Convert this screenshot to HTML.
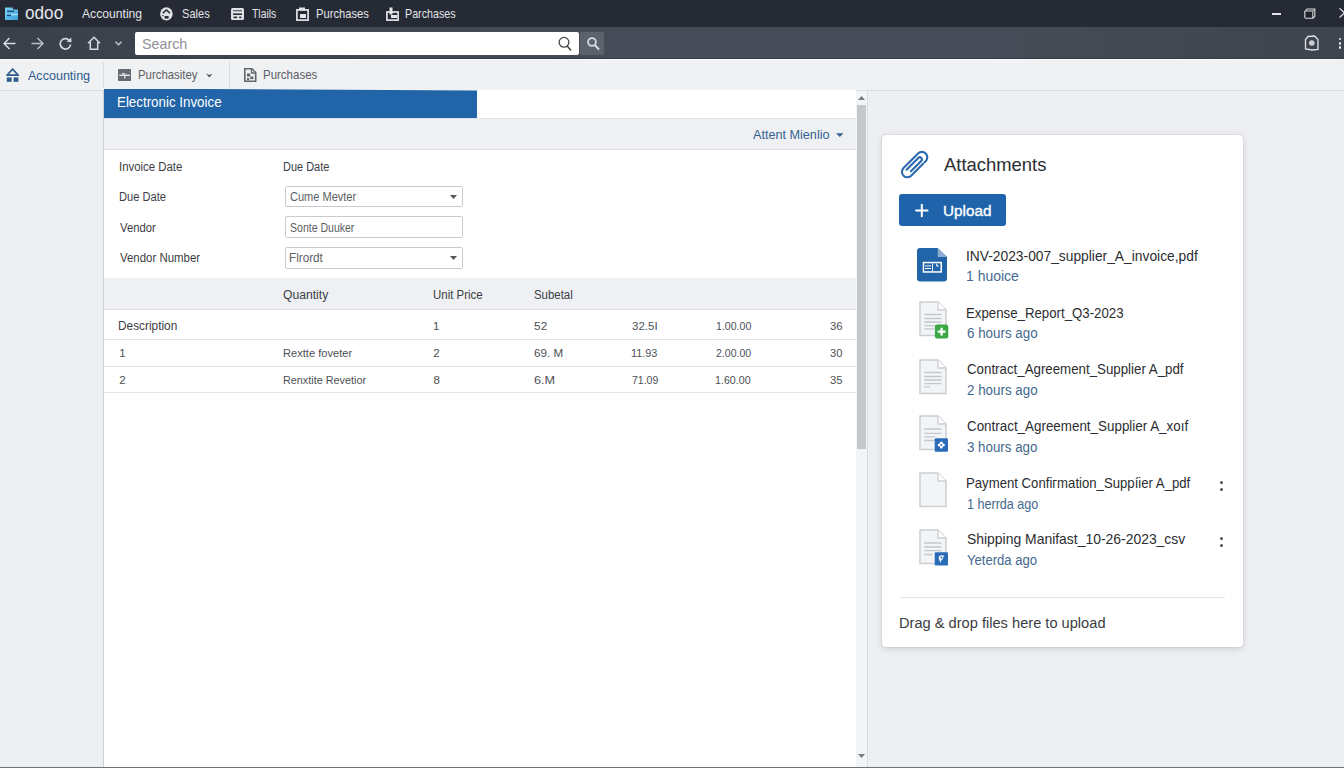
<!DOCTYPE html>
<html><head><meta charset="utf-8">
<style>
*{box-sizing:border-box;margin:0;padding:0}
html,body{width:1344px;height:768px;overflow:hidden}
body{font-family:"Liberation Sans",sans-serif;background:#edeff2;position:relative;color:#333}
.a{position:absolute}
.t{position:absolute;white-space:nowrap;line-height:1;top:0}
.wt{color:#e2e4e8;font-size:13px}
.bc{color:#5b5f66;font-size:13px}
.lbl{font-size:12.5px;color:#3b3e44}
.itx{font-size:12px;color:#5b5e63}
.num{font-size:11.5px;color:#4d5055}
.fname{font-size:15px;color:#2b2d31}
.fsub{font-size:14px;color:#45698e}
</style></head><body>
<!-- title bar -->
<div class="a" style="left:0;top:0;width:1344px;height:27px;background:#252a34"></div>
<svg class="a" style="left:4px;top:6px" width="15" height="15" viewBox="0 0 15 15"><defs><linearGradient id="lg" x1="0" y1="0" x2="1" y2="1"><stop offset="0" stop-color="#7fd4f6"></stop><stop offset="1" stop-color="#3a9fdc"></stop></linearGradient></defs><path d="M1 1.5 H8.5 L9.5 3.5 H14 V14 H1 Z" fill="url(#lg)"></path><rect x="3" y="4.6" width="7" height="1.4" fill="#1b4a70"></rect><rect x="3" y="8.8" width="4" height="1.3" fill="#1b4a70"></rect><rect x="7" y="8.2" width="7" height="1" fill="#bfeaff"></rect></svg>
<div class="t" style="left: 25.46px; color: rgb(230, 232, 236); font-size: 18px; top: 4px; transform: scaleX(0.9548); transform-origin: 0px 0px;">odoo</div>
<div class="t wt" style="left: 81.8px; top: 7.4px; transform: scaleX(0.9341); transform-origin: 0px 0px;">Accounting</div>
<svg class="a" style="left:159.5px;top:7.2px" width="13" height="14" viewBox="0 0 13 14"><ellipse cx="6.4" cy="6.8" rx="6.3" ry="6.6" fill="#dfe1e5"></ellipse><path d="M2.8 6.2 L6.4 3 L10 6.2" fill="none" stroke="#2a2f39" stroke-width="1.6"></path><rect x="4.6" y="9" width="4" height="2.6" fill="#2a2f39"></rect><rect x="2.3" y="8" width="1.2" height="1.2" fill="#2a2f39"></rect></svg>
<div class="t wt" style="left: 181.65px; top: 7.4px; transform: scaleX(0.8516); transform-origin: 0px 0px;">Sales</div>
<svg class="a" style="left:231px;top:8px" width="13" height="12" viewBox="0 0 13 12"><rect x="0" y="0" width="13" height="12" rx="1.5" fill="#dfe1e5"></rect><rect x="2" y="2.3" width="9" height="0.9" fill="#2a2f39"></rect><rect x="2" y="5.4" width="9" height="1.6" fill="#2a2f39"></rect><rect x="2.5" y="8.6" width="3.8" height="1.7" rx="0.8" fill="#2a2f39"></rect><rect x="8" y="8.6" width="2.5" height="1.7" rx="0.8" fill="#2a2f39"></rect></svg>
<div class="t wt" style="left: 251.84px; top: 7.4px; transform: scaleX(0.7973); transform-origin: 0px 0px;">Tlails</div>
<svg class="a" style="left:296px;top:7px" width="13" height="14" viewBox="0 0 13 14"><rect x="0.9" y="2.9" width="11.2" height="10.2" fill="none" stroke="#e2e4e8" stroke-width="1.7"></rect><rect x="3" y="0.5" width="6" height="3" fill="#e2e4e8"></rect><rect x="4" y="7" width="6" height="4" fill="#e2e4e8"></rect></svg>
<div class="t wt" style="left: 315.53px; top: 7.4px; transform: scaleX(0.86); transform-origin: 0px 0px;">Purchases</div>
<svg class="a" style="left:386px;top:7px" width="13" height="14" viewBox="0 0 13 14"><rect x="0.9" y="5" width="11.2" height="8.1" fill="none" stroke="#e2e4e8" stroke-width="1.7"></rect><rect x="3.5" y="0.5" width="3" height="7" fill="#e2e4e8"></rect><rect x="5" y="8" width="6" height="3" fill="#e2e4e8"></rect></svg>
<div class="t wt" style="left: 404.96px; top: 7.4px; transform: scaleX(0.8234); transform-origin: 0px 0px;">Parchases</div>
<div class="a" style="left:1272px;top:13px;width:9px;height:1.5px;background:#e2e4e8"></div>
<svg class="a" style="left:1304px;top:7.6px" width="12" height="11" viewBox="0 0 12 11"><path d="M1.2 3 L3 1 H10.8 V8.2 L9 10.2 H1.8 A1 1 0 0 1 0.8 9.2 V3.5 Z" fill="#1e222a" stroke="#dcdee2" stroke-width="1.1"></path><path d="M1.2 3 H8.8 V10 M8.8 3 L10.8 1" fill="none" stroke="#dcdee2" stroke-width="1"></path></svg>
<svg class="a" style="left:1338.5px;top:8px" width="6" height="10" viewBox="0 0 6 10"><path d="M0.5 0.3 L6.5 5.8 M0.5 9.5 L6.5 4" stroke="#dcdee2" stroke-width="1.2"></path></svg>

<!-- toolbar -->
<div class="a" style="left:0;top:27px;width:1344px;height:32px;background:linear-gradient(90deg,#3a404a 0%,#434954 30%,#474d58 50%,#464c57 75%,#3e444e 100%);border-bottom:1px solid #353a42"></div>
<svg class="a" style="left:3px;top:37px" width="13" height="13" viewBox="0 0 13 13"><path d="M12.5 6.5 H1.5 M6.5 1 L1 6.5 L6.5 12" fill="none" stroke="#d6d9dd" stroke-width="1.5"></path></svg>
<svg class="a" style="left:31px;top:37px" width="13" height="13" viewBox="0 0 13 13"><path d="M0.5 6.5 H11.5 M6.5 1 L12 6.5 L6.5 12" fill="none" stroke="#b9bdc3" stroke-width="1.5"></path></svg>
<svg class="a" style="left:59px;top:37px" width="13" height="13" viewBox="0 0 13 13"><path d="M11 4.3 A5.2 5.2 0 1 0 11.6 7.5" fill="none" stroke="#d6d9dd" stroke-width="1.7"></path><path d="M7.5 4.8 L12.5 5.2 L12.3 0.5 Z" fill="#d6d9dd"></path></svg>
<svg class="a" style="left:87px;top:36px" width="14" height="14" viewBox="0 0 14 14"><path d="M1 7.2 L7 1.2 L13 7.2 M3.3 6 V13.2 H10.7 V6" fill="none" stroke="#d6d9dd" stroke-width="1.5"></path></svg>
<svg class="a" style="left:115px;top:41px" width="7" height="5" viewBox="0 0 7 5"><path d="M0.5 0.7 L3.5 3.8 L6.5 0.7" fill="none" stroke="#c4c8cd" stroke-width="1.4"></path></svg>
<div class="a" style="left:135px;top:32.4px;width:443.5px;height:22.2px;background:#fff;border-radius:2px"></div>
<div class="t" style="left: 141.75px; color: rgb(142, 144, 148); font-size: 15px; top: 35.8px; transform: scaleX(0.9521); transform-origin: 0px 0px;">Search</div>
<svg class="a" style="left:557px;top:35px" width="16" height="17" viewBox="0 0 16 17"><circle cx="7" cy="7.3" r="4.9" fill="none" stroke="#454545" stroke-width="1.3"></circle><path d="M10.2 11 L14 15.5" stroke="#454545" stroke-width="1.5"></path></svg>
<div class="a" style="left:579.6px;top:32px;width:24.5px;height:22.6px;background:#5b626c;border-radius:2px"></div>
<svg class="a" style="left:586px;top:36px" width="15" height="15" viewBox="0 0 15 15"><circle cx="6" cy="6" r="3.9" fill="none" stroke="#d8dbdf" stroke-width="1.8"></circle><path d="M8.8 9 L13 13.5" stroke="#d8dbdf" stroke-width="2"></path></svg>
<svg class="a" style="left:1304px;top:35px" width="15" height="16" viewBox="0 0 15 16"><path d="M4 1.5 L10.5 1 L14 4.5 V14.5 L8 15 L1.5 14 V4.5 Z" fill="none" stroke="#e0e2e6" stroke-width="1.3"></path><circle cx="7.8" cy="8" r="2.8" fill="#c9ccd1"></circle></svg>
<div class="a" style="left:1338.5px;top:37.6px;width:2.8px;height:2.8px;background:#e2e4e8;border-radius:50%"></div>
<div class="a" style="left:1338.5px;top:42px;width:2.8px;height:2.8px;background:#e2e4e8;border-radius:50%"></div>
<div class="a" style="left:1338.5px;top:46.3px;width:2.8px;height:2.8px;background:#e2e4e8;border-radius:50%"></div>

<!-- breadcrumb -->
<div class="a" style="left:0;top:59px;width:1344px;height:32px;background:#f0f1f3;border-top:1px solid #fafbfc;border-bottom:1.5px solid #d9dbde"></div>
<svg class="a" style="left:6px;top:67.5px" width="14" height="14" viewBox="0 0 14 14"><path d="M1.6 6.5 L6.6 1.2 L11.6 6.5" fill="none" stroke="#2f5c8e" stroke-width="1.8"></path><rect x="0.3" y="6.2" width="12.7" height="1.8" fill="#2f5c8e"></rect><rect x="0.8" y="9.4" width="4.8" height="4.4" fill="#2f5c8e"></rect><rect x="7.6" y="9.4" width="4.8" height="4.4" fill="#2f5c8e"></rect></svg>
<div class="t" style="left: 28.3px; color: rgb(45, 91, 140); font-size: 13px; top: 68.6px; transform: scaleX(0.9655); transform-origin: 0px 0px;">Accounting</div>
<div class="a" style="left:103px;top:62px;width:1px;height:26px;background:#d9dce0"></div>
<svg class="a" style="left:117.7px;top:69px" width="13.2" height="12" viewBox="0 0 13.2 12"><rect x="0" y="0" width="13.2" height="12" rx="1" fill="#676b71"></rect><rect x="1.2" y="5.6" width="10.8" height="1.3" fill="#eef0f2"></rect><path d="M3.5 4.2 Q5 3.4 7 4.6 L8.5 5.6 L5 5.6Z" fill="#eef0f2"></path><rect x="6.2" y="6.5" width="1.2" height="3" fill="#eef0f2"></rect></svg>
<div class="t bc" style="left: 137.81px; top: 68.1px; transform: scaleX(0.8759); transform-origin: 0px 0px;">Purchasitey</div>
<svg class="a" style="left:205.6px;top:73px" width="6.5" height="5" viewBox="0 0 6.5 5"><path d="M0 0.6 L3.25 2 L6.5 0.6 L3.25 4.6Z" fill="#4a4e55"></path></svg>
<div class="a" style="left:229px;top:62px;width:1px;height:26px;background:#d9dce0"></div>
<svg class="a" style="left:244px;top:67.5px" width="12.5" height="14" viewBox="0 0 12.5 14"><path d="M0.8 0.8 H8 L11.7 4.5 V13.2 H0.8 Z" fill="none" stroke="#62666c" stroke-width="1.6"></path><path d="M7.5 0.8 V5 H11.7" fill="none" stroke="#62666c" stroke-width="1.3"></path><rect x="3" y="5.5" width="3.2" height="3" fill="#62666c"></rect><rect x="6.2" y="8.5" width="3.2" height="2.6" fill="#62666c"></rect><rect x="3" y="10" width="2.2" height="2.2" fill="#62666c"></rect></svg>
<div class="t bc" style="left: 263.1px; top: 68.3px; transform: scaleX(0.8834); transform-origin: 0px 0px;">Purchases</div>

<!-- form panel -->
<div class="a" style="left:103px;top:90px;width:753px;height:677px;background:#fff;border-left:1px solid #cdd1d6"></div>
<div class="a" style="left:104px;top:88.6px;width:373px;height:29.6px;background:#2164a7;clip-path:polygon(0 0,100% 1.8px,100% 100%,0 100%)"></div>
<div class="t" style="left: 117.46px; color: rgb(255, 255, 255); font-size: 14px; top: 95px; transform: scaleX(0.9532); transform-origin: 0px 0px;">Electronic Invoice</div>
<div class="a" style="left:104px;top:118px;width:752px;height:32px;background:#eef0f3;border-top:1px solid #e1e4e8;border-bottom:1px solid #dde0e4"></div>
<div class="t" style="left: 753.4px; color: rgb(53, 99, 143); font-size: 12.5px; top: 128.75px; transform: scaleX(1.0103); transform-origin: 0px 0px;">Attent Mienlio</div>
<svg class="a" style="left:836px;top:132.8px" width="8" height="5" viewBox="0 0 8 5"><path d="M0 0.3 H7.5 L3.75 4Z" fill="#35638f"></path></svg>

<div class="t lbl" style="left: 118.51px; top: 161.3px; transform: scaleX(0.9118); transform-origin: 0px 0px;">Invoice Date</div>
<div class="t lbl" style="left: 282.84px; top: 161.3px; transform: scaleX(0.8768); transform-origin: 0px 0px;">Due Date</div>
<div class="t lbl" style="left: 118.53px; top: 191.2px; transform: scaleX(0.8885); transform-origin: 0px 0px;">Due Date</div>
<div class="t lbl" style="left: 119.6px; top: 221.8px; transform: scaleX(0.905); transform-origin: 0px 0px;">Vendor</div>
<div class="t lbl" style="left: 119.6px; top: 252px; transform: scaleX(0.9144); transform-origin: 0px 0px;">Vendor Number</div>

<div class="a" style="left:284.8px;top:185.5px;width:178.2px;height:21.5px;border:1px solid #c8ccd1;border-radius:2px;background:#fff"></div>
<div class="t itx" style="left: 289.78px; top: 190.9px; transform: scaleX(0.9188); transform-origin: 0px 0px;">Cume Mevter</div>
<svg class="a" style="left:450px;top:194.5px" width="7" height="4" viewBox="0 0 7 4"><path d="M0 0 H7 L3.5 4Z" fill="#555"></path></svg>
<div class="a" style="left:284.8px;top:216.3px;width:178.2px;height:21.5px;border:1px solid #c8ccd1;border-radius:2px;background:#fff"></div>
<div class="t itx" style="left: 289.97px; top: 221.5px; transform: scaleX(0.8774); transform-origin: 0px 0px;">Sonte Duuker</div>
<div class="a" style="left:284.8px;top:246.9px;width:178.2px;height:21.8px;border:1px solid #c8ccd1;border-radius:2px;background:#fff"></div>
<div class="t itx" style="left: 289.38px; top: 252px; transform: scaleX(0.9771); transform-origin: 0px 0px;">Flrordt</div>
<svg class="a" style="left:450px;top:256px" width="7" height="4" viewBox="0 0 7 4"><path d="M0 0 H7 L3.5 4Z" fill="#555"></path></svg>

<div class="a" style="left:104px;top:278.2px;width:752px;height:31.5px;background:#eef0f3;border-bottom:1px solid #dde0e4"></div>
<div class="t lbl" style="left: 282.93px; top: 288.9px; transform: scaleX(0.9725); transform-origin: 0px 0px;">Quantity</div>
<div class="t lbl" style="left: 433.03px; top: 288.9px; transform: scaleX(0.9169); transform-origin: 0px 0px;">Unit Price</div>
<div class="t lbl" style="left: 534.24px; top: 288.9px; transform: scaleX(0.9131); transform-origin: 0px 0px;">Subetal</div>

<div class="t lbl" style="left: 118.47px; top: 319.9px; transform: scaleX(0.9483); transform-origin: 0px 0px;">Description</div>
<div class="t num" style="left: 433.03px; top: 321px;">1</div>
<div class="t num" style="left: 534.23px; top: 321px; transform: scaleX(1.0363); transform-origin: 0px 0px;">52</div>
<div class="t num" style="left: 631.74px; top: 321px; transform: scaleX(1.005); transform-origin: 0px 0px;">32.5I</div>
<div class="t num" style="left: 715.64px; top: 321px; transform: scaleX(0.9207); transform-origin: 0px 0px;">1.00.00</div>
<div class="t num" style="left: 829.55px; top: 321px; transform: scaleX(0.9861); transform-origin: 0px 0px;">36</div>
<div class="a" style="left:104px;top:339px;width:752px;height:1px;background:#e2e5e9"></div>

<div class="t num" style="left: 119.18px; top: 348px;">1</div>
<div class="t num" style="left: 282.63px; top: 348px; transform: scaleX(0.967); transform-origin: 0px 0px;">Rextte foveter</div>
<div class="t num" style="left: 433.21px; top: 348px;">2</div>
<div class="t num" style="left: 534.05px; top: 348px; transform: scaleX(1.0129); transform-origin: 0px 0px;">69. M</div>
<div class="t num" style="left: 631.42px; top: 348px; transform: scaleX(0.9462); transform-origin: 0px 0px;">11.93</div>
<div class="t num" style="left: 715.81px; top: 348px; transform: scaleX(0.9163); transform-origin: 0px 0px;">2.00.00</div>
<div class="t num" style="left: 829.65px; top: 348px; transform: scaleX(0.9633); transform-origin: 0px 0px;">30</div>
<div class="a" style="left:104px;top:365.5px;width:752px;height:1px;background:#e2e5e9"></div>

<div class="t num" style="left: 119.36px; top: 374.7px;">2</div>
<div class="t num" style="left: 282.65px; top: 374.7px; transform: scaleX(0.9421); transform-origin: 0px 0px;">Renxtite Revetior</div>
<div class="t num" style="left: 433.39px; top: 374.7px;">8</div>
<div class="t num" style="left: 534.01px; top: 374.7px; transform: scaleX(1.0976); transform-origin: 0px 0px;">6.M</div>
<div class="t num" style="left: 631.51px; top: 374.7px; transform: scaleX(0.9146); transform-origin: 0px 0px;">71.09</div>
<div class="t num" style="left: 715.33px; top: 374.7px; transform: scaleX(0.9287); transform-origin: 0px 0px;">1.60.00</div>
<div class="t num" style="left: 829.65px; top: 374.7px; transform: scaleX(0.9778); transform-origin: 0px 0px;">35</div>
<div class="a" style="left:104px;top:392px;width:752px;height:1px;background:#e2e5e9"></div>

<!-- scrollbar -->
<div class="a" style="left:855.5px;top:91px;width:12px;height:676px;background:#f3f4f5;border-right:1px solid #d9dbde"></div>
<div class="a" style="left:856.5px;top:104.5px;width:9px;height:344px;background:#c6c7ca"></div>
<svg class="a" style="left:857px;top:95px" width="9" height="6" viewBox="0 0 9 6"><path d="M1 5 L4.5 1 L8 5Z" fill="#7a7d82"></path></svg>
<svg class="a" style="left:857px;top:753px" width="9" height="6" viewBox="0 0 9 6"><path d="M1 1 L4.5 5 L8 1Z" fill="#7a7d82"></path></svg>

<!-- card -->
<div class="a" style="left:882px;top:135px;width:361.2px;height:512px;background:#fff;border-radius:4px;box-shadow:0 2px 7px rgba(0,0,0,.13),0 0 1.5px rgba(0,0,0,.22)"></div>
<svg class="a" style="left:896px;top:146px" width="38" height="38" viewBox="0 0 38 38"><g transform="translate(18.6 18.6) rotate(45)" fill="none" stroke="#2a6aad" stroke-width="2.1" stroke-linecap="round"><path d="M5.4 -8.6 V-10.3 A5.4 5.4 0 0 0 -5.4 -10.3 V10.3 A5.4 5.4 0 0 0 5.4 10.3 V-6.6"></path><path d="M-2.1 9.3 V-7.3 A2.1 2.1 0 0 1 2.1 -7.3 V7.3"></path></g></svg>
<div class="t" style="left: 943.6px; color: rgb(43, 45, 49); font-size: 18.5px; top: 156.1px; transform: scaleX(0.9956); transform-origin: 0px 0px;">Attachments</div>
<div class="a" style="left:899.3px;top:194.2px;width:106.5px;height:31.6px;background:#1f64ab;border-radius:3px"></div>
<svg class="a" style="left:915px;top:204px" width="14" height="13" viewBox="0 0 14 13"><path d="M6.8 0 V13 M0.3 6.5 H13.3" stroke="#fff" stroke-width="2"></path></svg>
<div class="t" style="left: 943.05px; color: rgb(255, 255, 255); font-size: 15.5px; -webkit-text-stroke: 0.35px rgb(255, 255, 255); top: 202.6px; transform: scaleX(0.9856); transform-origin: 0px 0px;">Upload</div>
<svg class="a" style="left:917px;top:248px" width="31" height="35" viewBox="0 0 31 35"><path d="M3 0 H20.7 L30 9 V30.5 A3 3 0 0 1 27 33.5 H3 A3 3 0 0 1 0 30.5 V3 A3 3 0 0 1 3 0Z" fill="#2264a8"></path><path d="M20.7 0 V9 H30Z" fill="#8eaccf"></path><rect x="5.7" y="13.8" width="19.3" height="10.9" fill="#fff"></rect><rect x="7.2" y="15.3" width="16.3" height="7.9" fill="#2264a8"></rect><rect x="8" y="17.4" width="6" height="1" fill="#fff"></rect><rect x="8" y="20" width="6" height="1" fill="#fff"></rect><rect x="15.1" y="15.3" width="0.9" height="7.9" fill="#fff"></rect><path d="M19 15.3 L22 18.5 L19.5 18.5Z" fill="#fff"></path></svg>
<div class="t fname" style="left: 966.22px; top: 247.5px; transform: scaleX(0.9202); transform-origin: 0px 0px;">INV-2023-007_supplier_A_invoice,pdf</div>
<div class="t fsub" style="left: 966.43px; top: 269.2px; transform: scaleX(0.9983); transform-origin: 0px 0px;">1 huoice</div>
<svg class="a" style="left:918.5px;top:301.0px" width="31" height="38" viewBox="0 0 31 38"><path d="M1 1 H19 L27 9 V34.5 H1 Z" fill="#f3f4f6" stroke="#cbced3" stroke-width="1.5"></path><path d="M19 1 V9 H27" fill="#fff" stroke="#cbced3" stroke-width="1.3"></path><path d="M5.3 13.5 H22.5 M5.3 17.5 H22.5 M5.3 21 H22.5 M5.3 24.7 H22.5 M5.3 27.8 H15" stroke="#c3c6cb" stroke-width="1.3"></path><rect x="15.9" y="23.6" width="13.4" height="13.8" rx="2.5" fill="#3aa845"></rect><path d="M22.6 26.7 V34.5 M18.7 30.6 H26.5" stroke="#fff" stroke-width="2.3"></path></svg>
<div class="t fname" style="left: 966.27px; top: 304.5px; transform: scaleX(0.883); transform-origin: 0px 0px;">Expense_Report_Q3-2023</div>
<div class="t fsub" style="left: 966.67px; top: 326.2px; transform: scaleX(0.9543); transform-origin: 0px 0px;">6 hours ago</div>
<svg class="a" style="left:918.5px;top:358.7px" width="31" height="38" viewBox="0 0 31 38"><path d="M1 1 H19 L27 9 V34.5 H1 Z" fill="#f3f4f6" stroke="#cbced3" stroke-width="1.5"></path><path d="M19 1 V9 H27" fill="#fff" stroke="#cbced3" stroke-width="1.3"></path><path d="M5.3 13.5 H22.5 M5.3 17.5 H22.5 M5.3 21 H22.5 M5.3 24.7 H22.5 M5.3 27.8 H11" stroke="#c3c6cb" stroke-width="1.3"></path></svg>
<div class="t fname" style="left: 966.68px; top: 361px; transform: scaleX(0.8863); transform-origin: 0px 0px;">Contract_Agreement_Supplier A_pdf</div>
<div class="t fsub" style="left: 966.67px; top: 382.6px; transform: scaleX(0.9543); transform-origin: 0px 0px;">2 hours ago</div>
<svg class="a" style="left:918.5px;top:414.9px" width="31" height="38" viewBox="0 0 31 38"><path d="M1 1 H19 L27 9 V34.5 H1 Z" fill="#f3f4f6" stroke="#cbced3" stroke-width="1.5"></path><path d="M19 1 V9 H27" fill="#fff" stroke="#cbced3" stroke-width="1.3"></path><path d="M5.3 14 H22.5 M5.3 18.3 H22.5 M5.3 21.9 H16 M5.3 25.5 H16" stroke="#c3c6cb" stroke-width="1.3"></path><g transform="translate(0.4 1)"><rect x="15.3" y="22.2" width="13.3" height="13.6" rx="1.2" fill="#2a6cb8"></rect><circle cx="21.9" cy="29" r="2.4" fill="#fff"></circle><circle cx="21.9" cy="26.6" r="1.2" fill="#fff"></circle><circle cx="21.9" cy="31.4" r="1.2" fill="#fff"></circle><circle cx="19.5" cy="29" r="1.2" fill="#fff"></circle><circle cx="24.3" cy="29" r="1.2" fill="#fff"></circle><circle cx="21.9" cy="29" r="1" fill="#2a6cb8"></circle></g></svg>
<div class="t fname" style="left: 966.67px; top: 418px; transform: scaleX(0.893); transform-origin: 0px 0px;">Contract_Agreement_Supplier A_xoıf</div>
<div class="t fsub" style="left: 966.88px; top: 439.8px; transform: scaleX(0.9515); transform-origin: 0px 0px;">3 hours ago</div>
<svg class="a" style="left:918.5px;top:472.2px" width="31" height="38" viewBox="0 0 31 38"><path d="M1 1 H19 L27 9 V34.5 H1 Z" fill="#f3f4f6" stroke="#cbced3" stroke-width="1.5"></path><path d="M19 1 V9 H27" fill="#fff" stroke="#cbced3" stroke-width="1.3"></path></svg>
<div class="t fname" style="left: 966.27px; top: 475px; transform: scaleX(0.8773); transform-origin: 0px 0px;">Payment Confiгmation_Suppíier A_pdf</div>
<div class="t fsub" style="left: 966.51px; top: 496.6px; transform: scaleX(0.898); transform-origin: 0px 0px;">1 herrda ago</div>
<svg class="a" style="left:918.5px;top:528.5px" width="31" height="38" viewBox="0 0 31 38"><path d="M1 1 H19 L27 9 V34.5 H1 Z" fill="#f3f4f6" stroke="#cbced3" stroke-width="1.5"></path><path d="M19 1 V9 H27" fill="#fff" stroke="#cbced3" stroke-width="1.3"></path><path d="M5.3 14 H22.5 M5.3 18 H22.5 M5.3 21.7 H22.5 M5.3 25.5 H13.5" stroke="#c3c6cb" stroke-width="1.3"></path><g transform="translate(0.4 1)"><rect x="15.3" y="22.2" width="13.3" height="13.2" rx="1.2" fill="#2a6cb8"></rect><path d="M19.5 26.5 Q21.5 24.5 24.5 25.5 Q24 29 21.5 31 L21 33 L20 30 Q18.8 28.5 19.5 26.5Z" fill="#fff"></path><circle cx="22" cy="27.5" r="1" fill="#2a6cb8"></circle></g></svg>
<div class="t fname" style="left: 966.86px; top: 531.4px; transform: scaleX(0.9281); transform-origin: 0px 0px;">Shipping Manifast_10-26-2023_csv</div>
<div class="t fsub" style="left: 967.1px; top: 552.5px; transform: scaleX(0.9352); transform-origin: 0px 0px;">Yeterda ago</div>
<div class="a" style="left:1219.9px;top:481.1px;width:3.2px;height:3.2px;border-radius:50%;background:#4c4f54"></div>
<div class="a" style="left:1219.9px;top:488.1px;width:3.2px;height:3.2px;border-radius:50%;background:#4c4f54"></div>
<div class="a" style="left:1219.9px;top:537px;width:3.2px;height:3.2px;border-radius:50%;background:#4c4f54"></div>
<div class="a" style="left:1219.9px;top:543.7px;width:3.2px;height:3.2px;border-radius:50%;background:#4c4f54"></div>
<div class="a" style="left:899.8px;top:597px;width:325.7px;height:1px;background:#e1e3e7"></div>
<div class="t" style="left: 898.66px; color: rgb(58, 61, 66); font-size: 15.3px; top: 614.9px; transform: scaleX(0.9562); transform-origin: 0px 0px;">Drag &amp; drop files here to upload</div>
<div class="a" style="left:0;top:766.8px;width:1344px;height:1.2px;background:#6e7277"></div>

</body></html>
